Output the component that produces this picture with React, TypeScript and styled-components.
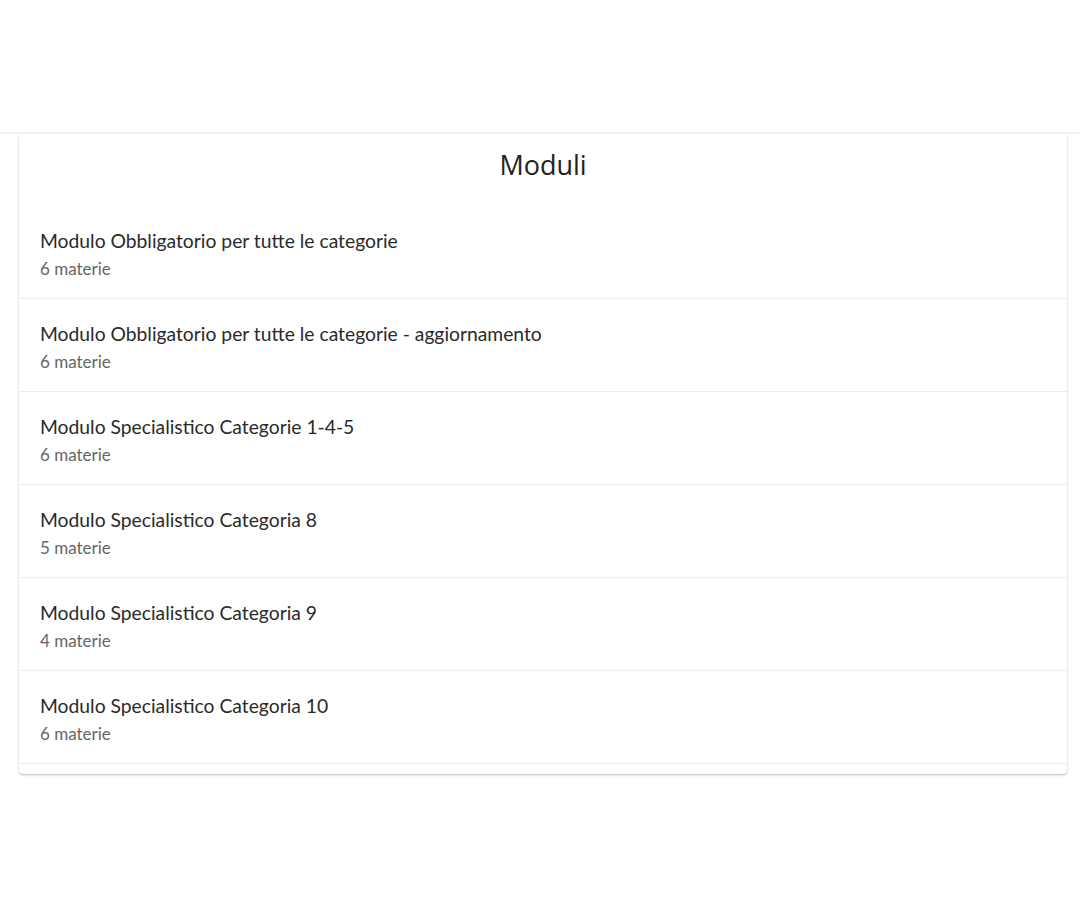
import React from "react";
import styled, { createGlobalStyle } from "styled-components";

const GlobalStyle = createGlobalStyle`
    body {
        margin: 0;
        background: #fff;
        font-family: "Lato", "Liberation Sans", sans-serif;
    }
`

const modules = [
    { name: 'Modulo Obbligatorio per tutte le categorie', count: 6 },
    { name: 'Modulo Obbligatorio per tutte le categorie - aggiornamento', count: 6 },
    { name: 'Modulo Specialistico Categorie 1-4-5', count: 6 },
    { name: 'Modulo Specialistico Categoria 8', count: 5 },
    { name: 'Modulo Specialistico Categoria 9', count: 4 },
    { name: 'Modulo Specialistico Categoria 10', count: 6 },
]

export default function App() {
    return (
        <Page>
            <GlobalStyle />
            <TopBar />
            <Card>
                <Title>Moduli</Title>
                <List>
                    {modules.map((m) => (
                        <Row key={m.name}>
                            <RowTitle>{m.name}</RowTitle>
                            <RowSub>{m.count} materie</RowSub>
                        </Row>
                    ))}
                </List>
            </Card>
        </Page>
    )
}

const Page = styled.div`
    width: 100%;
    min-height: 920px;
    padding-top: 132px;
    box-sizing: border-box;
`
const TopBar = styled.div`
    height: 2px;
    background: #f3f3f3;
`
const Card = styled.div`
    margin: 0 13px 0 19px;
    background: #fff;
    border-radius: 4px;
    box-shadow: 0 1px 3px rgba(0, 0, 0, 0.18), 0 1px 1px rgba(0, 0, 0, 0.12);
    padding-bottom: 10px;
`
const Title = styled.h2`
    margin: 0;
    height: 72px;
    box-sizing: border-box;
    padding-bottom: 11px;
    display: flex;
    align-items: center;
    justify-content: center;
    font-family: "Open Sans", sans-serif;
    font-weight: 400;
    font-size: 27px;
    color: #222;
`
const List = styled.div`
    display: flex;
    flex-direction: column;
`
const Row = styled.div`
    height: 93px;
    box-sizing: border-box;
    padding: 23px 21px 0;
    border-bottom: 1px solid #ececec;
    display: flex;
    flex-direction: column;
    gap: 5px;
`
const RowTitle = styled.div`
    font-size: 19.3px;
    line-height: 24px;
    color: #2a2a2a;
`
const RowSub = styled.div`
    font-size: 17px;
    line-height: 22px;
    color: #666;
`
